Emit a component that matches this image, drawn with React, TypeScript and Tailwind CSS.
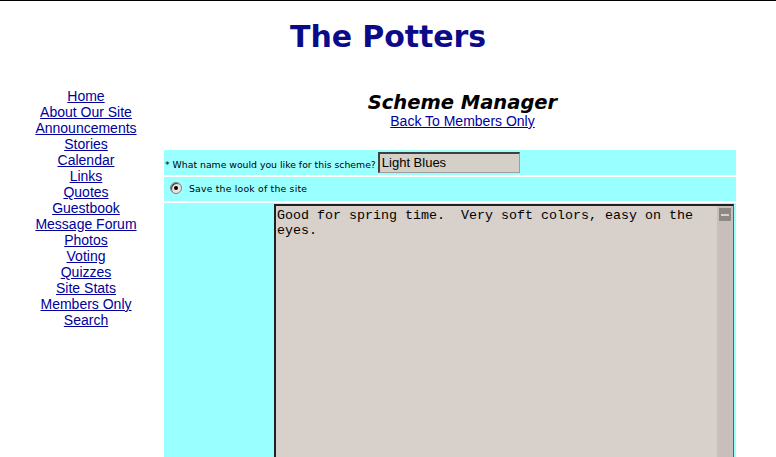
import React from "react";

const navLinks = [
  "Home",
  "About Our Site",
  "Announcements",
  "Stories",
  "Calendar",
  "Links",
  "Quotes",
  "Guestbook",
  "Message Forum",
  "Photos",
  "Voting",
  "Quizzes",
  "Site Stats",
  "Members Only",
  "Search",
];

export default function App() {
  return (
    <div className="w-[776px] h-[457px] overflow-hidden bg-white border-t border-black font-['Liberation_Sans',Arial,sans-serif]">
      {/* Site title */}
      <h1 className="pt-[18px] text-center text-[30px] leading-[36px] font-bold text-[#0b0b8a] font-['DejaVu_Sans',Verdana,sans-serif] tracking-[-0.1px]">
        The Potters
      </h1>

      <div className="flex mt-[33px]">
        {/* Left navigation */}
        <nav className="ml-[8px] w-[156px] flex flex-col items-center text-[14px] leading-[16px]">
          {navLinks.map((label) => (
            <a key={label} href="#" className="text-[#00009c] underline">
              {label}
            </a>
          ))}
        </nav>

        {/* Main content */}
        <main className="w-[597px]">
          <div className="text-center text-[14px] leading-[16px]">
            <h2 className="text-[19.5px] leading-[20px] font-bold italic text-black font-['DejaVu_Sans',Verdana,sans-serif] mt-[5px]">
              Scheme Manager
            </h2>
            <a href="#" className="text-[#00009c] underline">
              Back To Members Only
            </a>
          </div>

          <div className="mt-[21px] w-[572px] flex flex-col gap-[2px] font-['DejaVu_Sans',Verdana,sans-serif] text-[9.3px] text-black">
            {/* Row 1: name */}
            <div className="h-[25px] bg-[#99ffff] flex items-center pl-[1px]">
              <span className="mt-[4px]">* What name would you like for this scheme?</span>
              <div className="ml-[2px] w-[142px] h-[21px] bg-[#d4d0c8] border-t-2 border-l-2 border-t-[#404040] border-l-[#404040] border-b border-r border-b-[#a09c98] border-r-[#a09c98] flex items-center pl-[2px] text-[13px] font-['Liberation_Sans',Arial,sans-serif]">
                Light Blues
              </div>
            </div>

            {/* Row 2: radio */}
            <div className="h-[24px] bg-[#99ffff] flex items-center pl-[6px]">
              <span className="w-[12px] h-[12px] rounded-full bg-[#e8e4e0] border border-[#808080] flex items-center justify-center shadow-[inset_1px_1px_0_#404040] -mt-[2px]">
                <span className="w-[4px] h-[4px] rounded-full bg-black" />
              </span>
              <span className="ml-[7px] tracking-[0.2px]">Save the look of the site</span>
            </div>

            {/* Row 3: description */}
            <div className="h-[260px] bg-[#99ffff] flex">
              <div className="w-[110px]" />
              <div className="mt-[1px] w-[460px] h-[260px] flex bg-[#d7d0cb] border-t-2 border-l-2 border-[#202020] border-r border-r-[#6a5a58]">
                <div className="flex-1 pl-[1px] pt-[2px] font-['Liberation_Mono','Courier_New',monospace] text-[13.33px] leading-[15px] whitespace-pre-wrap">
                  {"Good for spring time.  Very soft colors, easy on the\neyes."}
                </div>
                <div className="w-[16px] bg-[#c8bfba] flex flex-col">
                  <div className="h-[15px] mt-[1px] mx-[1px] bg-[#8f8782] border border-[#c8c0bb] flex items-center justify-center">
                    <span className="w-[8px] h-[2px] bg-[#d8d0cc]" />
                  </div>
                </div>
              </div>
            </div>
          </div>
        </main>
      </div>
    </div>
  );
}
